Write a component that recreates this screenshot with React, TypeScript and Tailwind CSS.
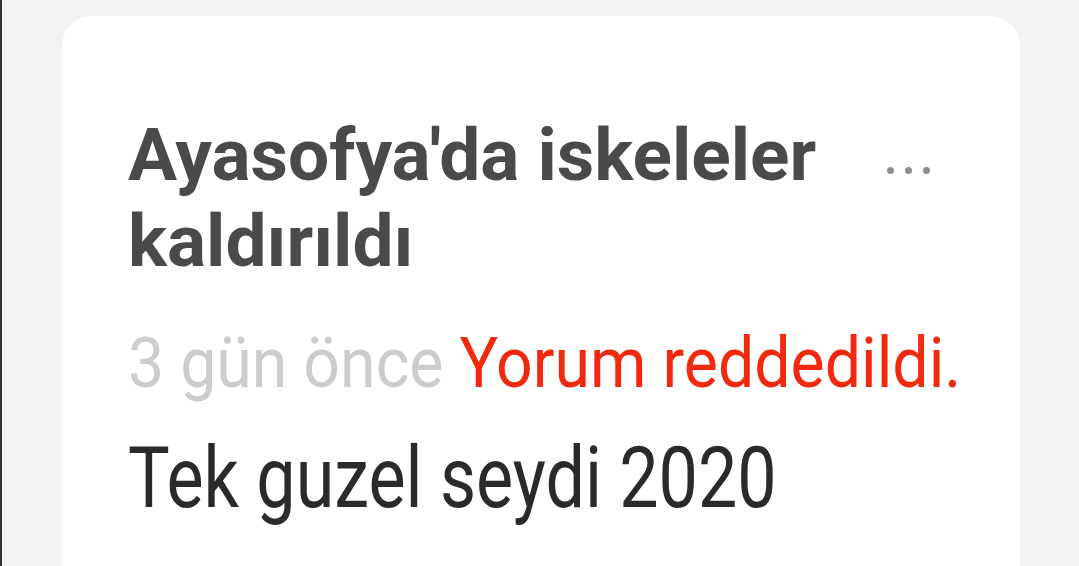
export default function App() {
  return (
    <div className="h-[566px] w-[1079px] overflow-hidden border-l-2 border-[#333333] bg-[#f3f3f3] pl-[60px] pr-[59px] pt-4 font-['Roboto',sans-serif]">
      <div className="h-[600px] rounded-[30px] bg-white pl-[66px] pr-[90px] pt-[96px]">
        <div className="flex items-start justify-between">
          <h1 className="w-[720px] text-[73px] font-bold leading-[86px] text-[#4a4a4a]">Ayasofya'da iskeleler kaldırıldı</h1>
          <div className="mt-[55px] flex gap-[11px]">
            <span className="h-[7px] w-[7px] rounded-full bg-[#8e8e8e]" />
            <span className="h-[7px] w-[7px] rounded-full bg-[#8e8e8e]" />
            <span className="h-[7px] w-[7px] rounded-full bg-[#8e8e8e]" />
          </div>
        </div>
        <p className="mt-[41px] origin-[0_77%] scale-y-[1.09] whitespace-nowrap text-[64.4px] leading-[80px] text-[#cccccc]">
          3 gün önce <span className="text-[#f2290d]">Yorum reddedildi.</span>
        </p>
        <p className="mt-[38px] origin-[0_80%] scale-y-[1.22] whitespace-nowrap text-[70px] leading-[80px] text-[#2a2a2a]">Tek guzel seydi 2020</p>
      </div>
    </div>
  )
}
